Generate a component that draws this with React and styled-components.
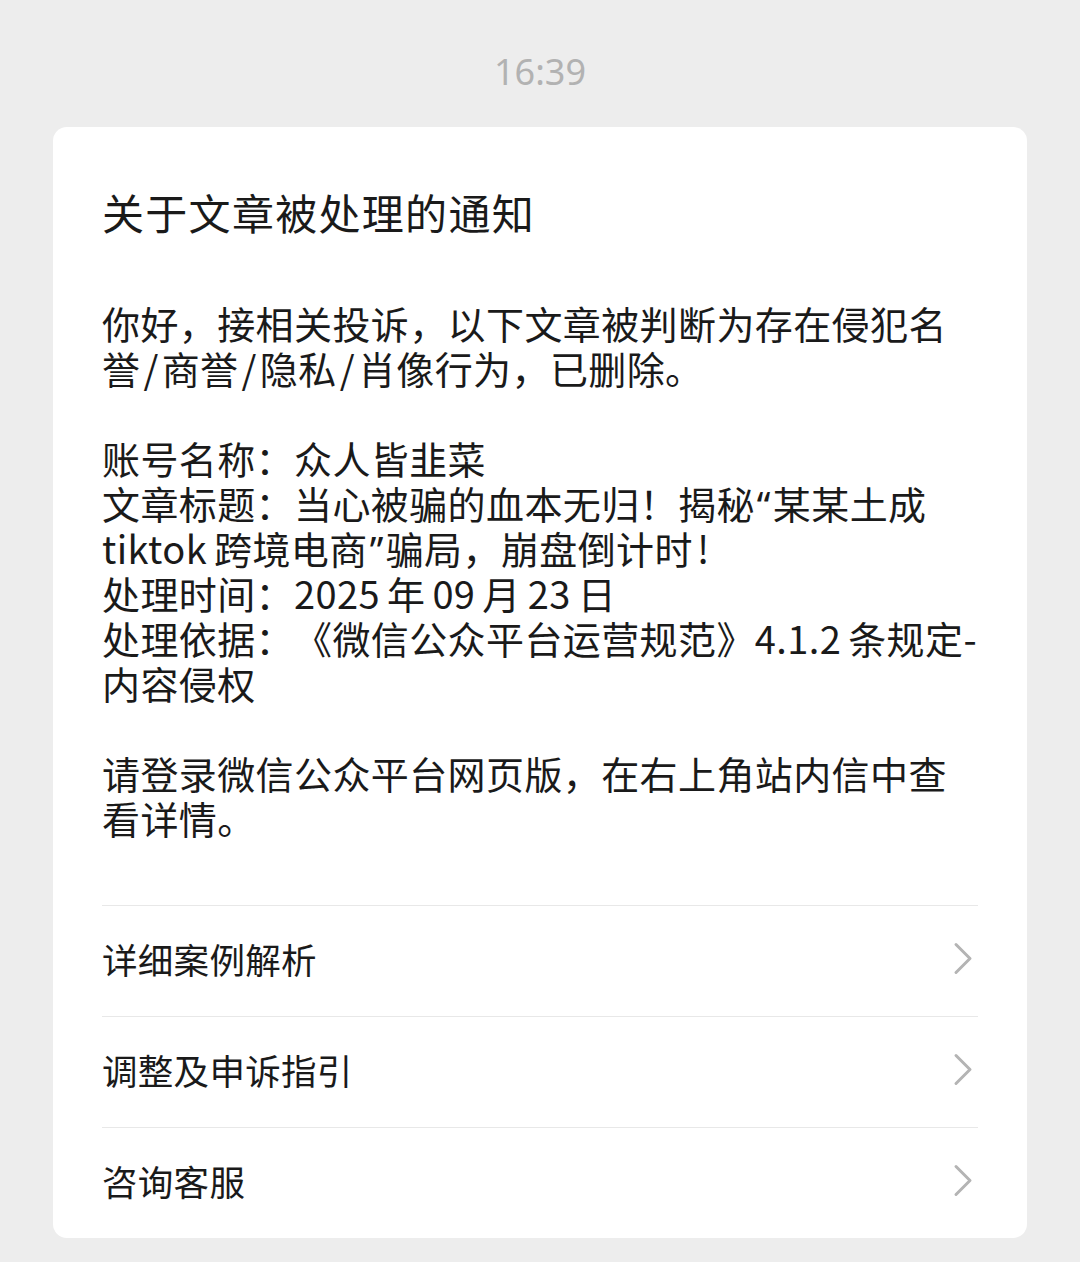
import React from 'react'
import styled, { createGlobalStyle } from 'styled-components'

const GlobalStyle = createGlobalStyle`
    html, body {
        margin: 0;
        padding: 0;
        background: #ededed;
    }
    body {
        font-family: "Noto Sans CJK SC", "Noto Sans", sans-serif;
        color: #1a1a1a;
    }
`

const rows = ['详细案例解析', '调整及申诉指引', '咨询客服']

function Chevron() {
    return (
        <svg width="20" height="33" viewBox="0 0 20 33" fill="none">
            <polyline points="3,2.5 17,16.5 3,30.5" stroke="#b4b4b4" strokeWidth="3" strokeLinecap="round" strokeLinejoin="round" />
        </svg>
    )
}

function App() {
    return (
        <Page>
            <GlobalStyle />
            <Time>16:39</Time>
            <Card>
                <Title>关于文章被处理的通知</Title>
                <Body>
                    <Paragraph>
                        你好，接相关投诉，以下文章被判断为存在侵犯名<br />
                        誉<Slash>/</Slash>商誉<Slash>/</Slash>隐私<Slash>/</Slash>肖像行为，已删除。
                    </Paragraph>
                    <Paragraph>
                        账号名称：众人皆韭菜<br />
                        文章标题：当心被骗的血本无归！揭秘<Quote>“</Quote>某某土成<br />
                        tiktok<Gap />跨境电商<Quote>”</Quote>骗局，崩盘倒计时<Bang>!</Bang><br />
                        处理时间：2025<Gap />年<Gap />09<Gap />月<Gap />23<Gap />日<br />
                        处理依据：《微信公众平台运营规范》4.1.2<Gap />条规定-<br />
                        内容侵权
                    </Paragraph>
                    <Paragraph>
                        请登录微信公众平台网页版，在右上角站内信中查<br />
                        看详情。
                    </Paragraph>
                </Body>
                <Menu>
                    {rows.map(text => (
                        <MenuRow key={text}>
                            <span>{text}</span>
                            <Chevron />
                        </MenuRow>
                    ))}
                </Menu>
            </Card>
        </Page>
    )
}

export default App

const Page = styled.div`
    width: 1080px;
    min-height: 1262px;
    box-sizing: border-box;
    padding: 0 53px;
    display: flex;
    flex-direction: column;
`
const Time = styled.div`
    height: 127px;
    box-sizing: border-box;
    padding-top: 17px;
    display: flex;
    align-items: center;
    justify-content: center;
    font-family: "Noto Sans", "Liberation Sans", sans-serif;
    font-size: 36px;
    line-height: 1;
    color: #b2b2b2;
`
const Card = styled.div`
    background: #ffffff;
    border-radius: 14px;
    padding: 57px 49px 0;
    display: flex;
    flex-direction: column;
`
const Title = styled.h1`
    margin: 0;
    font-size: 42px;
    font-weight: 400;
    line-height: 56px;
    letter-spacing: 1.3px;
    color: #1a1a1a;
`
const Body = styled.div`
    margin-top: 60px;
    display: flex;
    flex-direction: column;
    gap: 45px;
`
const Paragraph = styled.p`
    margin: 0;
    font-size: 38px;
    line-height: 45px;
    white-space: nowrap;
    letter-spacing: 0.4px;
    text-spacing-trim: space-all;
`
const Slash = styled.span`
    margin: 0 3px;
`
const Quote = styled.span`
    font-family: "Noto Sans", "Liberation Sans", sans-serif;
    line-height: 0;
    margin: 0 2px;
`
const Bang = styled.span`
    margin-left: 4px;
`
const Gap = styled.span`
    display: inline-block;
    width: 7px;
`
const Menu = styled.div`
    margin-top: 65px;
    display: flex;
    flex-direction: column;
`
const MenuRow = styled.div`
    height: 111px;
    box-sizing: border-box;
    border-top: 1.5px solid #e8e8e8;
    padding: 0 5px 5px 0;
    display: flex;
    align-items: center;
    justify-content: space-between;
    font-size: 35.5px;
    color: #1a1a1a;
    cursor: pointer;

    span {
        letter-spacing: 0.3px;
    }
`
